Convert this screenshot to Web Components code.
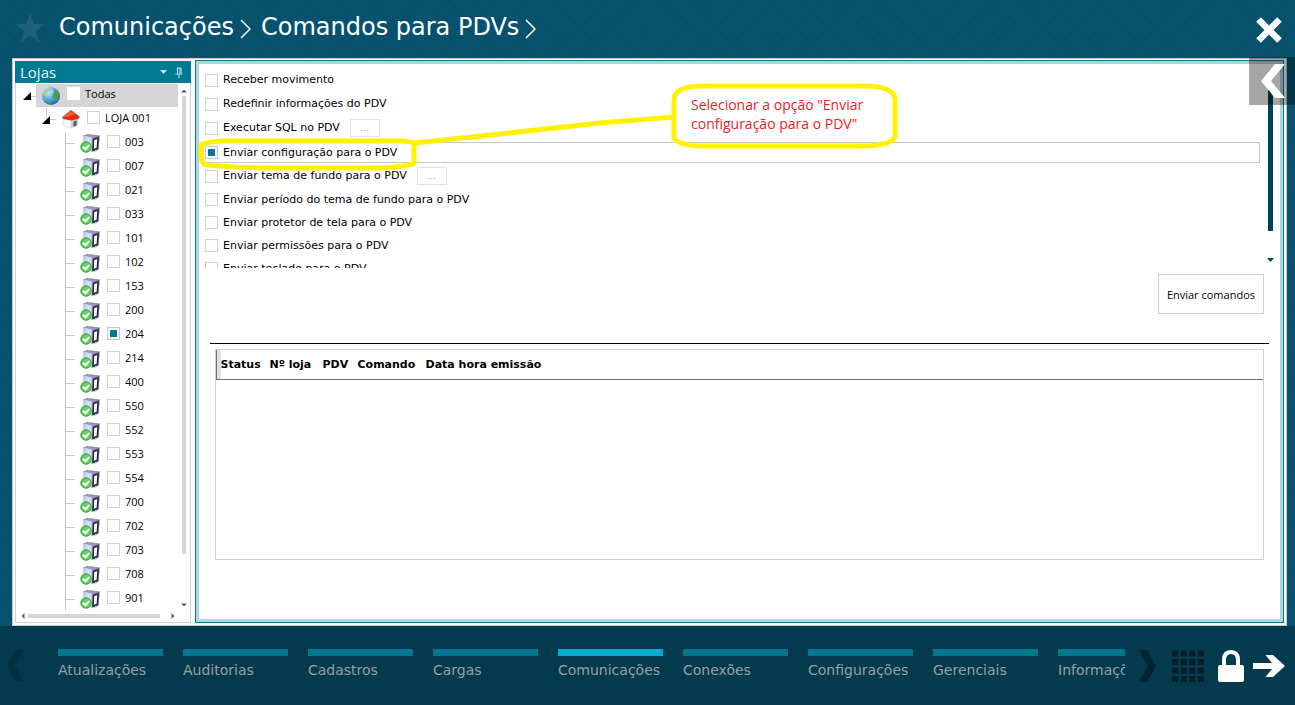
<!DOCTYPE html>
<html lang="pt-BR">
<head>
<meta charset="utf-8">
<title>Comunicações - Comandos para PDVs</title>
<style>
  body {
    margin: 0;
    font-family: "DejaVu Sans", Verdana, sans-serif;
    font-size: 11px;
    color: #000;
  }
</style>
</head>
<body>
<pdv-app></pdv-app>

<script>
const define = (name, html, setup) => {
  const template = document.createElement("template");
  template.innerHTML = html;
  customElements.define(name, class extends HTMLElement {
    constructor() {
      super();
      this.attachShadow({ mode: "open" });
      this.shadowRoot.appendChild(template.content.cloneNode(true));
    }
    connectedCallback() {
      if (setup) setup(this, this.shadowRoot);
    }
  });
};

const checkStyle = `
  input {
    appearance: none;
    flex: none;
    box-sizing: border-box;
    width: 13px;
    height: 13px;
    margin: 0;
    border: 1px solid #d2d2d2;
    background: #fff;
  }
  input:checked {
    background: #007a91;
    border-color: #c8c8c8;
    box-shadow: inset 0 0 0 2px #fff;
  }
`;

const icons = {
  globe: `<svg width="20" height="20" viewBox="0 0 20 20">
    <defs><radialGradient id="g" cx=".35" cy=".28" r=".75">
      <stop offset="0" stop-color="#d8f0ff"/><stop offset=".45" stop-color="#6bb4ea"/><stop offset="1" stop-color="#1c66b4"/>
    </radialGradient></defs>
    <circle cx="10" cy="10" r="9" fill="url(#g)"/>
    <path d="M2.500 6.500 4.500 4l3-1.500 3 .5-1 2-2.500 1-1 2-2 1.500-2-.5z" fill="#a9cf6a" opacity=".85"/>
    <path d="M13 3.500l3 1.500 2 3-.5 4-2.500 3-1.500-3-2-1 .5-3 1.500-1z" fill="#4f9d43"/>
    <path d="M5 13l3 1 1 2-1.500 1.500L5 16z" fill="#62a94d" opacity=".7"/>
  </svg>`,
  house: `<svg width="20" height="20" viewBox="0 0 20 20">
    <path d="M2 8 10 11v8.500L2 15.500z" fill="#f4f4f6" stroke="#c9cacf" stroke-width=".5"/>
    <path d="M10 11 17.500 8v7.500l-7.500 4z" fill="#cfd1d6"/>
    <path d="M12.500 12.500l3-1.200v5.200l-3 1.600z" fill="#55585f"/>
    <path d="M10 1 1 8.500 2.500 10 10 11.500 17 10 19 8z" fill="#dc2c14"/>
    <path d="M10 1 1 8.500 7 8 15 5z" fill="#f3542f"/>
  </svg>`,
  pdv: `<svg width="20" height="21" viewBox="0 0 20 21">
    <defs><linearGradient id="s"><stop offset="0" stop-color="#b6bbdc"/><stop offset=".35" stop-color="#e4e7f8"/><stop offset="1" stop-color="#7c82aa"/></linearGradient></defs>
    <path d="M3 2.500 8 1l11.500 1.500L18.500 17l-6 2.500L4 17z" fill="url(#s)"/>
    <path d="M3 2.500 8 1l11.500 1.500-7.500 2z" fill="#8e94b8"/>
    <path d="M12.500 5l7-2-1 13-6.500 2.500z" fill="#565c7e"/>
    <path d="M13.500 6.500l4.500-1-.8 9.500-4 2z" fill="#f4f5fb" stroke="#1e2230" stroke-width="1.200"/>
    <circle cx="6" cy="14" r="5.700" fill="#35a63c"/>
    <circle cx="6" cy="14" r="4.700" fill="#69cf5f"/>
    <path d="M3 13.800l2.500 2.500 4-4.500" fill="none" stroke="#fff" stroke-width="2"/>
  </svg>`
};

define("app-header", `
  <style>
    :host {
      flex: none;
      display: flex;
      align-items: center;
      height: 58px;
      padding: 0 13px 0 15px;
      box-sizing: border-box;
      color: #fff;
    }
    .star, .close { background: none; border: 0; padding: 0; display: flex; }
    .star { margin-bottom: 2px; }
    nav { display: flex; align-items: center; margin: 0 auto 4px 14px; gap: 6px; }
    a { color: inherit; text-decoration: none; font-size: 24px; line-height: 30px; white-space: nowrap; }
    .sep { margin: 4px 4px 0 0; }
    .close { margin-top: 2px; }
  </style>
  <button class="star" aria-label="Favorito">
    <svg width="30" height="30" viewBox="0 0 30 30"><path d="M15 0l3.500 11H30l-9.300 6.700L24.500 30 15 22 5.500 30l3.800-12.300L0 11h11.500z" fill="#20607d"/></svg>
  </button>
  <nav>
    <a href="#comunicacoes">Comunicações</a>
    <svg class="sep" width="11" height="20" viewBox="0 0 11 20"><path d="M1 1l9 9-9 9" fill="none" stroke="#fff" stroke-width="1.500"/></svg>
    <a href="#comandos">Comandos para PDVs</a>
    <svg class="sep" width="11" height="20" viewBox="0 0 11 20"><path d="M1 1l9 9-9 9" fill="none" stroke="#fff" stroke-width="1.500"/></svg>
  </nav>
  <button class="close" aria-label="Fechar">
    <svg width="26" height="26" viewBox="0 0 26 26"><path d="M2.500 2.500l21 21M23.500 2.500l-21 21" stroke="#fff" stroke-width="6.500"/></svg>
  </button>
`);

define("tree-item", `
  <style>
    :host { display: block; height: 24px; position: relative; }
    label {
      display: flex;
      align-items: flex-start;
      height: 23px;
      font: 11px/20px "Open Sans", "Segoe UI", sans-serif;
    }
    .icon { display: flex; width: 20px; margin: 1px 7px 0 0; }
    ${checkStyle}
    input { margin: 3px 5px 0 0; }
    :host([level="0"]) { margin-left: 20px; }
    :host([level="0"]) label { background: #d6d4d6; padding-left: 5px; }
    :host([level="0"]) .icon { margin: 2px 6px 0 0; }
    :host([level="0"]) input { border-color: #fff; }
    :host([level="1"]) { margin-left: 45px; }
    :host([level="1"]) .icon { margin-right: 6px; }
    :host([level="2"]) { margin-left: 64px; }
    /* connector lines and expander */
    .stub { position: absolute; right: 100%; top: 11px; width: 10px; margin-right: 5px; border-top: 1px solid #c8c8c8; }
    .line { position: absolute; right: 100%; top: 0; bottom: 0; margin-right: 14px; border-left: 1px solid #c8c8c8; }
    .arrow { position: absolute; right: 100%; top: 8px; margin-right: 10px; display: none; }
    :host([level="0"]) .stub { margin-right: 0; top: 12px; width: 6px; }
    :host([level="0"]) .line { display: none; }
    :host([level="0"]) .arrow { display: block; margin-right: 5px; }
    :host([level="1"]) .arrow { display: block; margin-right: 11px; }
    :host([level="1"]) .line { bottom: 14px; }
  </style>
  <span class="line"></span><span class="stub"></span>
  <svg class="arrow" width="8" height="8" viewBox="0 0 8 8"><path d="M8 0v8H0z" fill="#000"/></svg>
  <label><span class="icon"></span><input type="checkbox"><slot></slot></label>
`, (el, root) => {
  root.querySelector(".icon").innerHTML = icons[el.getAttribute("icon")];
  root.querySelector("input").checked = el.hasAttribute("checked");
});

define("store-tree", `
  <style>
    :host {
      display: flex;
      flex-direction: column;
      flex: 0 0 176px;
      box-sizing: border-box;
      border: 1px solid #d0d0d0;
      border-top: 0;
      margin-top: 1px;
    }
    header {
      display: flex;
      align-items: center;
      gap: 8px;
      height: 22px;
      margin: 0 -1px 1px;
      padding: 0 8px 0 5px;
      background: #007a91;
      color: #e6f4f7;
    }
    h2 { flex: 1; margin: 0; font: 15px/22px "Open Sans", "Segoe UI", sans-serif; }
    .body { flex: 1; min-height: 0; display: grid; grid-template: 1fr 12px / 1fr 12px; }
    .items { overflow: hidden; }
    .vbar { display: flex; flex-direction: column; align-items: center; padding: 5px 0 3px; }
    .vbar i { flex: 1; width: 4px; background: #d6d4d6; margin: 3px 0 49px; }
    .hbar { display: flex; align-items: center; padding: 0 3px 0 5px; }
    .hbar i { flex: 1; height: 4px; background: #d6d4d6; margin: 0 11px 0 3px; }
  </style>
  <header>
    <h2>Lojas</h2>
    <svg width="7" height="4" viewBox="0 0 7 4"><path d="M0 0h7L3.500 4z" fill="#c5e6ec"/></svg>
    <svg width="8" height="11" viewBox="0 0 8 11"><path d="M2.500 1v5.500M2 1h4M5 1v5.500M6 1v5.500M.500 7h7M4 7v4" fill="none" stroke="#c5e6ec"/></svg>
  </header>
  <div class="body">
    <div class="items"><slot></slot></div>
    <div class="vbar">
      <svg width="6" height="4" viewBox="0 0 6 4"><path d="M0 3.500 3 .500l3 3z" fill="#606060"/></svg><i></i>
      <svg width="6" height="4" viewBox="0 0 6 4"><path d="M0 .500h6l-3 3z" fill="#606060"/></svg>
    </div>
    <div class="hbar">
      <svg width="4" height="6" viewBox="0 0 4 6"><path d="M3.500 0v6L.500 3z" fill="#606060"/></svg><i></i>
      <svg width="4" height="6" viewBox="0 0 4 6"><path d="M.500 0v6l3-3z" fill="#606060"/></svg>
    </div>
  </div>
`);

define("command-option", `
  <style>
    :host { display: flex; align-items: center; height: 23px; padding-left: 1px; border: 1px solid transparent; box-sizing: border-box; }
    :host([tall]) { height: 24px; }
    :host([checked]) { height: 21px; margin: 2px 0 1px; border-color: #c8c8c8; }
    label { display: flex; align-items: center; gap: 5px; line-height: 16px; white-space: nowrap; }
    ${checkStyle}
    button {
      width: 30px;
      height: 18px;
      margin-left: 10px;
      padding: 0;
      border: 1px solid #e2e2e2;
      background: #fff;
      color: #999;
      font: 9px/16px "DejaVu Sans", sans-serif;
    }
  </style>
  <label><input type="checkbox"><slot></slot></label>
`, (el, root) => {
  root.querySelector("input").checked = el.hasAttribute("checked");
  if (el.hasAttribute("more")) {
    const button = document.createElement("button");
    button.textContent = "...";
    root.appendChild(button);
  }
});

define("command-list", `
  <style>
    :host { display: flex; height: 204px; box-sizing: border-box; padding-left: 4px; overflow: hidden; }
    .items { flex: 1; padding-top: 4px; }
    .bar { display: flex; flex-direction: column; align-items: center; width: 7px; margin: 26px 6px 6px 7px; }
    .bar i { width: 5px; height: 141px; background: #004259; margin-bottom: auto; }
    svg { flex: none; }
  </style>
  <div class="items"><slot></slot></div>
  <div class="bar"><i></i><svg width="7" height="4" viewBox="0 0 7 4"><path d="M0 0h7L3.500 4z" fill="#004259"/></svg></div>
`);

define("command-log", `
  <style>
    :host { display: block; border: 1px solid #d0d0d0; }
    table { width: 100%; border-collapse: collapse; table-layout: fixed; }
    th { height: 29px; padding: 0; text-align: left; font-weight: bold; font-size: 11px; border-bottom: 1px solid #707070; white-space: nowrap; }
    .mark { background: #e2e2e2; border-left: 1px solid #707070; }
  </style>
  <table>
    <colgroup><col style="width:4px"><col style="width:49px"><col style="width:53px"><col style="width:35px"><col style="width:68px"><col></colgroup>
    <thead><tr><th class="mark"></th><th>Status</th><th>Nº loja</th><th>PDV</th><th>Comando</th><th>Data hora emissão</th></tr></thead>
    <tbody></tbody>
  </table>
`);

define("command-panel", `
  <style>
    :host {
      flex: 1;
      min-width: 0;
      display: flex;
      flex-direction: column;
      box-sizing: border-box;
      border: 1px solid #007a91;
      box-shadow: inset 0 0 0 3px #b0d5de;
      padding: 3px;
    }
    .actions { display: flex; justify-content: flex-end; padding: 6px 16px 29px 0; }
    .actions button {
      height: 40px;
      padding: 0 8px;
      border: 1px solid #d0d0d0;
      background: #fff;
      color: #000;
      font: 11px "Open Sans", "Segoe UI", sans-serif;
    }
    hr { width: auto; margin: 0 11px 5px; border: 0; border-top: 1px solid #000; }
    command-log { flex: 1; margin: 0 16px 59px; }
  </style>
  <slot></slot>
  <div class="actions"><button>Enviar comandos</button></div>
  <hr>
  <command-log></command-log>
`);

define("note-callout", `
  <style>
    :host { position: absolute; left: 198px; top: 24px; width: 700px; height: 90px; pointer-events: none; }
    svg { position: absolute; left: 0; top: 0; }
    p {
      position: absolute;
      left: 493px;
      top: 13px;
      margin: 0;
      width: 190px;
      color: #ed1c24;
      font: 14px/19px "Open Sans", "Segoe UI", sans-serif;
    }
  </style>
  <svg width="700" height="90" viewBox="198 82 700 90" fill="none" stroke="#fff200" stroke-width="5" stroke-linejoin="round">
    <path d="M201 145Q205 142 224 141L400 141Q412 141 414 144L414 163Q412 165 396 167L380 168H265L235 167 206 165Q201 163 201 154Z"/>
    <path d="M414 143L500 134 600 123 674 117"/>
    <path d="M674 99Q675 87 700 86H868Q892 87 895 98V137Q893 144 868 146H697Q677 144 674 138Z"/>
  </svg>
  <p><slot></slot></p>
`);

define("nav-tab", `
  <style>
    :host { flex: 0 0 105px; }
    a { display: block; border-top: 7px solid #00778f; padding-top: 4px; color: #9a9fa3; font-size: 14px; line-height: 20px; text-decoration: none; white-space: nowrap; }
    :host([active]) a { border-color: #00acd3; }
  </style>
  <a href="#"><slot></slot></a>
`);

define("app-footer", `
  <style>
    :host { flex: none; display: flex; height: 79px; background: #033a4e; align-items: flex-start; padding: 23px 10px 0 7px; box-sizing: border-box; }
    button { flex: none; display: flex; border: 0; padding: 0; background: none; }
    nav { flex: 1; min-width: 0; display: flex; gap: 20px; overflow: hidden; margin: 0 14px 0 34px; }
    .tools { display: flex; align-items: center; height: 34px; margin-left: 16px; }
    .tools button + button { margin-left: 14px; }
    .tools button:last-child { margin-left: 9px; }
  </style>
  <button aria-label="Anterior"><svg width="17" height="34" viewBox="0 0 17 34"><path d="M9 1h8L8 17l9 16H9L0 17z" fill="#02303f"/></svg></button>
  <nav><slot></slot></nav>
  <button aria-label="Próximo"><svg width="17" height="34" viewBox="0 0 17 34"><path d="M8 1H0l9 16-9 16h8l9-16z" fill="#022430"/></svg></button>
  <div class="tools">
    <button aria-label="Menu"><svg width="32" height="32" viewBox="0 0 32 32">
      <path d="M0 3.500h32M0 12h32M0 20.500h32M0 29h32" stroke="#021e29" stroke-width="6" stroke-dasharray="6.200 2.400"/></svg></button>
    <button aria-label="Bloquear"><svg width="26" height="32" viewBox="0 0 26 32">
      <rect y="15" width="26" height="17" rx="2" fill="#fff"/>
      <path d="M6 17V10Q6 2 13 2t7 8v7" fill="none" stroke="#fff" stroke-width="4"/></svg></button>
    <button aria-label="Sair"><svg width="32" height="22" viewBox="0 0 32 22"><path d="M0 8h19L12.500 0H20l12 11-12 11h-7.500L19 14H0z" fill="#fff"/></svg></button>
  </div>
`);

define("pdv-app", `
  <style>
    :host {
      display: flex;
      flex-direction: column;
      height: 100vh;
      background:
        repeating-linear-gradient(45deg, #0000000c 0 1px, transparent 1px 8px),
        repeating-linear-gradient(-45deg, #0000000c 0 1px, transparent 1px 8px),
        #07536f;
    }
    main { position: relative; flex: 1; min-height: 0; display: flex; padding: 0 8px 0 12px; }
    .window { flex: 1; min-width: 0; display: flex; gap: 4px; box-sizing: border-box; border: 1px solid #c9c9c9; background: #fff; padding: 1px 2px 2px; }
    .drawer { position: absolute; top: -1px; right: 0; width: 46px; height: 48px; padding: 7px 0 0 12px; border: 0; background: #00000059; display: flex; }
    .drawer svg { flex: none; }
  </style>
  <app-header></app-header>
  <main>
    <div class="window">
      <store-tree></store-tree>
      <command-panel>
        <command-list>
          <command-option tall>Receber movimento</command-option>
          <command-option tall>Redefinir informações do PDV</command-option>
          <command-option tall more>Executar SQL no PDV</command-option>
          <command-option checked>Enviar configuração para o PDV</command-option>
          <command-option tall more>Enviar tema de fundo para o PDV</command-option>
          <command-option>Enviar período do tema de fundo para o PDV</command-option>
          <command-option>Enviar protetor de tela para o PDV</command-option>
          <command-option>Enviar permissões para o PDV</command-option>
          <command-option>Enviar teclado para o PDV</command-option>
        </command-list>
      </command-panel>
    </div>
    <note-callout>Selecionar a opção "Enviar<br>configuração para o PDV"</note-callout>
    <button class="drawer" aria-label="Abrir painel">
      <svg width="24" height="34" viewBox="0 0 24 34"><path d="M14 0h10L10 17l14 17H14L0 17z" fill="#fff"/></svg>
    </button>
  </main>
  <app-footer>
    <nav-tab>Atualizações</nav-tab>
    <nav-tab>Auditorias</nav-tab>
    <nav-tab>Cadastros</nav-tab>
    <nav-tab>Cargas</nav-tab>
    <nav-tab active>Comunicações</nav-tab>
    <nav-tab>Conexões</nav-tab>
    <nav-tab>Configurações</nav-tab>
    <nav-tab>Gerenciais</nav-tab>
    <nav-tab>Informações</nav-tab>
  </app-footer>
`, (el, root) => {
  const pdvs = ["003", "007", "021", "033", "101", "102", "153", "200", "204", "214", "400",
    "550", "552", "553", "554", "700", "702", "703", "708", "901"];
  root.querySelector("store-tree").innerHTML =
    `<tree-item level="0" icon="globe">Todas</tree-item>
     <tree-item level="1" icon="house">LOJA 001</tree-item>` +
    pdvs.map(n => `<tree-item level="2" icon="pdv" ${n === "204" ? "checked" : ""}>${n}</tree-item>`).join("");
});
</script>
</body>
</html>
